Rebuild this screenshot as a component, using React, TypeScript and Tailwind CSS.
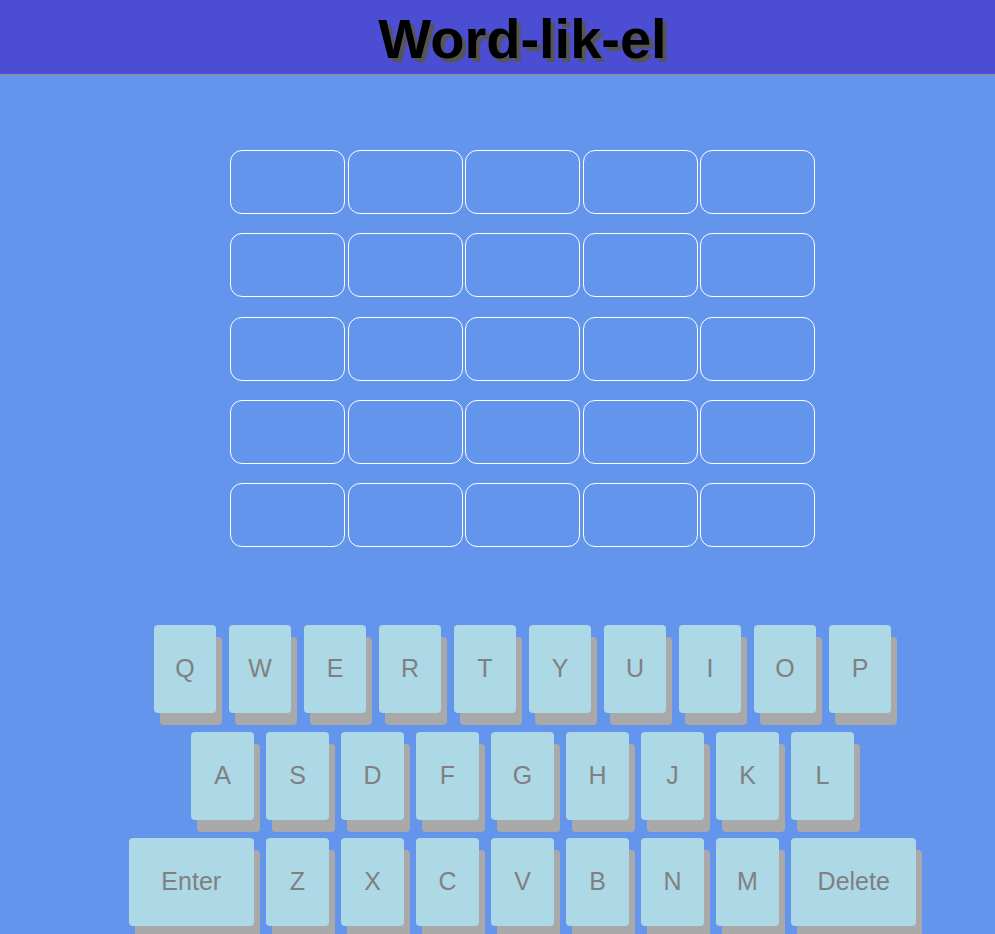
const ROWS = 5;
const COLS = 5;

const KEY_ROWS = [
  ["Q", "W", "E", "R", "T", "Y", "U", "I", "O", "P"],
  ["A", "S", "D", "F", "G", "H", "J", "K", "L"],
  ["Enter", "Z", "X", "C", "V", "B", "N", "M", "Delete"],
];

function Key({ label }: { label: string }) {
  const wide = label === "Enter" || label === "Delete";
  return (
    <button
      className={`${wide ? "w-[125px]" : "w-[62.5px]"} h-[88px] shrink-0 rounded-[4px] bg-[#add8e6] text-[25px] text-[#808080] shadow-[6px_12px_0_#a9a9a9] flex items-center justify-center`}
    >
      {label}
    </button>
  );
}

export default function App() {
  return (
    <div className="min-h-[934px] bg-[#6495ed] font-['Liberation_Sans',Arial,sans-serif]">
      <header className="h-[75px] pl-[50px] pt-[4px] bg-[#4b4ed2] border-b border-[#9a8c7e] flex items-center justify-center">
        <h1 className="text-[56px] font-bold text-black leading-none [text-shadow:4px_4px_0_#555]">
          Word-lik-el
        </h1>
      </header>

      <main className="pl-[50px] flex flex-col items-center">
        <div className="mt-[75px] flex flex-col gap-[19.25px]">
          {Array.from({ length: ROWS }).map((_, r) => (
            <div key={r} className="flex gap-[2.5px]">
              {Array.from({ length: COLS }).map((_, c) => (
                <div key={c} className="w-[115px] h-[64px] rounded-[12px] border border-white" />
              ))}
            </div>
          ))}
        </div>

        <div className="mt-[78px] flex flex-col items-center gap-[18.5px]">
          {KEY_ROWS.map((row, i) => (
            <div key={i} className="flex gap-[12.5px]">
              {row.map((k) => (
                <Key key={k} label={k} />
              ))}
            </div>
          ))}
        </div>
      </main>
    </div>
  );
}
